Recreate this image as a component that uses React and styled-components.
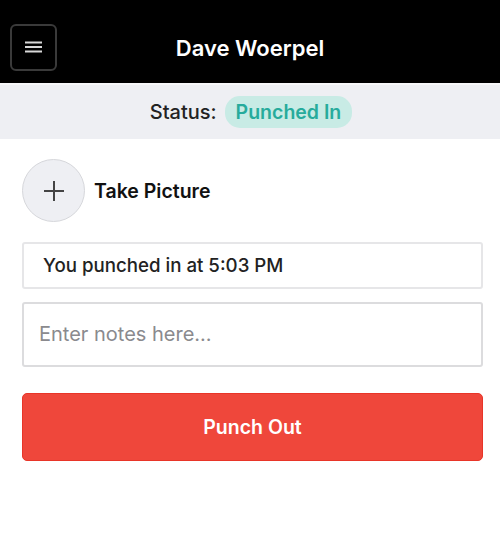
import React from "react";
import styled, { createGlobalStyle } from "styled-components";

const Global = createGlobalStyle`
  html, body { margin: 0; padding: 0; background: #fff; }
  body { font-family: Inter, "Noto Sans", sans-serif; -webkit-font-smoothing: antialiased; }
  * { box-sizing: border-box; }
`;

const Page = styled.div`
  width: 500px;
  min-height: 541px;
  background: #fff;
`;

const Header = styled.header`
  height: 83px;
  background: #000;
  display: grid;
  grid-template-columns: 57px 1fr 57px;
  align-items: center;
  padding: 11px 0 0 10px;
`;

const MenuButton = styled.button`
  width: 47px;
  height: 47px;
  border: 2px solid #3a3a3a;
  border-radius: 6px;
  background: #000;
  display: flex;
  align-items: center;
  justify-content: center;
  padding: 0;
`;

const Title = styled.h1`
  margin: 2px 0 0 -10px;
  text-align: center;
  color: #fff;
  font-size: 22px;
  font-weight: 600;
`;

const StatusBar = styled.div`
  height: 56px;
  border-top: 2px solid #f7f7f9;
  background: #eeeff3;
  display: flex;
  align-items: center;
  justify-content: center;
  gap: 8px;
  padding-left: 2px;
`;

const StatusLabel = styled.span`
  font-size: 20px;
  font-weight: 500;
  color: #222;
`;

const Pill = styled.span`
  background: #c8ebe5;
  color: #27ab9c;
  font-size: 19.5px;
  font-weight: 600;
  padding: 4px 11px;
  border-radius: 15px;
`;

const Content = styled.main`
  padding: 20px 17px 0 22px;
  display: flex;
  flex-direction: column;
`;

const PictureRow = styled.div`
  display: flex;
  align-items: center;
  gap: 9px;
`;

const CircleButton = styled.button`
  width: 63px;
  height: 63px;
  border-radius: 50%;
  border: 1.5px solid #d6d7db;
  background: #eeeff3;
  display: flex;
  align-items: center;
  justify-content: center;
  padding: 0;
`;

const PictureLabel = styled.span`
  font-size: 19.5px;
  font-weight: 600;
  color: #111;
`;

const InfoBox = styled.div`
  margin-top: 20px;
  height: 47px;
  border: 2px solid #e6e6e8;
  border-radius: 3px;
  display: flex;
  align-items: center;
  padding-left: 19px;
  font-size: 18.7px;
  font-weight: 500;
  color: #222;
`;

const Notes = styled.textarea`
  margin-top: 13px;
  height: 65px;
  border: 2px solid #dcdcde;
  border-radius: 3px;
  padding: 18px 15px;
  font-family: inherit;
  font-size: 20px;
  resize: none;
  outline: none;
  &::placeholder { color: #8a8a8e; }
`;

const PunchButton = styled.button`
  margin-top: 26px;
  height: 68px;
  border: 1.5px solid #e83528;
  border-radius: 5px;
  background: #ef473b;
  color: #fff;
  font-family: inherit;
  font-size: 19.5px;
  font-weight: 600;
`;

export default function App() {
  return (
    <Page>
      <Global />
      <Header>
        <MenuButton aria-label="Menu">
          <svg width="17" height="12" viewBox="0 0 17 12">
            <g stroke="#d8d8d8" strokeWidth="2">
              <line x1="0" y1="1.5" x2="17" y2="1.5" />
              <line x1="0" y1="6" x2="17" y2="6" />
              <line x1="0" y1="10.5" x2="17" y2="10.5" />
            </g>
          </svg>
        </MenuButton>
        <Title>Dave Woerpel</Title>
        <span />
      </Header>
      <StatusBar>
        <StatusLabel>Status:</StatusLabel>
        <Pill>Punched In</Pill>
      </StatusBar>
      <Content>
        <PictureRow>
          <CircleButton aria-label="Take Picture">
            <svg width="22" height="22" viewBox="0 0 22 22">
              <g stroke="#444" strokeWidth="2">
                <line x1="11" y1="1" x2="11" y2="21" />
                <line x1="1" y1="11" x2="21" y2="11" />
              </g>
            </svg>
          </CircleButton>
          <PictureLabel>Take Picture</PictureLabel>
        </PictureRow>
        <InfoBox>You punched in at 5:03 PM</InfoBox>
        <Notes placeholder="Enter notes here..." />
        <PunchButton>Punch Out</PunchButton>
      </Content>
    </Page>
  );
}
